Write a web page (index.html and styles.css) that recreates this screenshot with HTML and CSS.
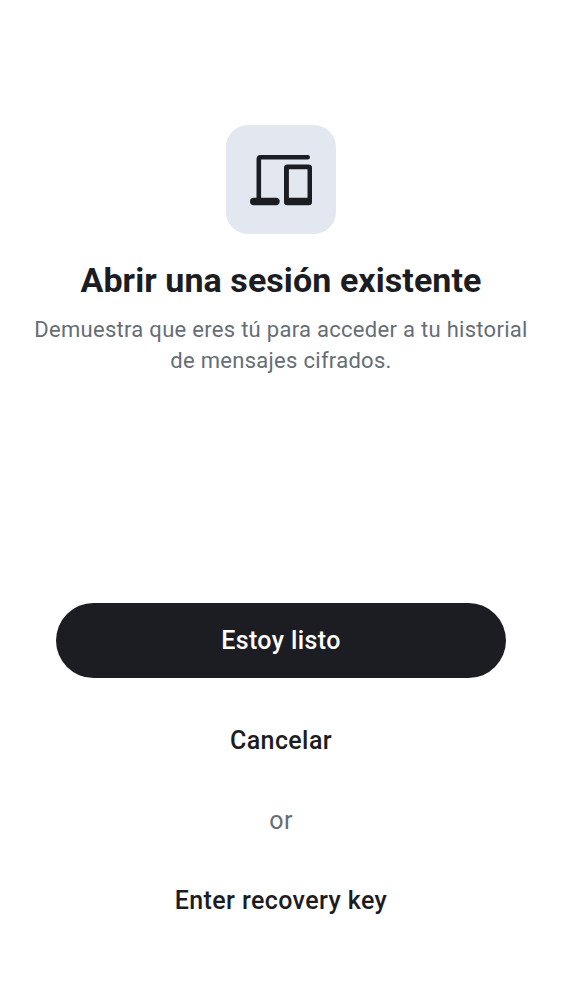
FILE: index.html
```html
<!DOCTYPE html>
<html lang="es">
<head>
<meta charset="utf-8">
<title>Abrir una sesión existente</title>
<link rel="stylesheet" href="styles.css">
</head>
<body>
<main class="screen">
  <header class="intro">
    <div class="badge">
      <svg class="icon" viewBox="0 0 62 50" aria-hidden="true">
        <path d="M8.800 44V4.300Q8.800 2.300 10.800 2.300H57.700" fill="none" stroke="currentColor" stroke-width="4.600" stroke-linecap="round"/>
        <path d="M3.700 46.500H26" fill="none" stroke="currentColor" stroke-width="7.400" stroke-linecap="round"/>
        <path fill-rule="evenodd" fill="currentColor" d="M37.300 9.400H58.700Q62 9.400 62 12.700V46.900Q62 50.200 58.700 50.200H37.300Q34 50.200 34 46.900V12.700Q34 9.400 37.300 9.400ZM38.900 14.200V42.800H57.500V14.200Z"/>
      </svg>
    </div>
    <h1 class="title">Abrir una sesión existente</h1>
    <p class="subtitle">Demuestra que eres tú para acceder a tu historial<br>de mensajes cifrados.</p>
  </header>
  <footer class="actions">
    <button class="button primary">Estoy listo</button>
    <button class="button">Cancelar</button>
    <p class="divider">or</p>
    <button class="button">Enter recovery key</button>
  </footer>
</main>
</body>
</html>
```
FILE: styles.css
```css
* { box-sizing: border-box; }
body { margin: 0; background: #fff; color: #1b1d22; font-family: Roboto, sans-serif; }
.screen { display: flex; flex-direction: column; justify-content: space-between; height: 1000px; padding: 125px 0 62px; }
.intro { display: flex; flex-direction: column; align-items: center; text-align: center; }
.badge { display: flex; align-items: center; justify-content: center; width: 109.400px; height: 109.400px; border-radius: 22px; background: #e3e8f0; }
.icon { width: 62px; height: 50px; overflow: visible; }
.title { margin: 24.600px 0 0; font-size: 34px; line-height: 42px; font-weight: 700; letter-spacing: .08px; white-space: nowrap; }
.subtitle { margin: 13px 0 0; color: #656d77; font-size: 22px; line-height: 31.300px; letter-spacing: .29px; white-space: nowrap; }
.actions { display: flex; flex-direction: column; padding: 0 56px; }
.button { height: 75px; padding: 0; border: 0; border-radius: 38px; background: none; color: inherit; font: 500 25px/37px Roboto, sans-serif; letter-spacing: .4px; }
.primary { margin-bottom: 25px; background: #1b1d22; color: #fff; }
.divider { margin: 24px 0; height: 37px; color: #656d77; font-size: 25px; line-height: 37px; letter-spacing: .4px; text-align: center; }
```
